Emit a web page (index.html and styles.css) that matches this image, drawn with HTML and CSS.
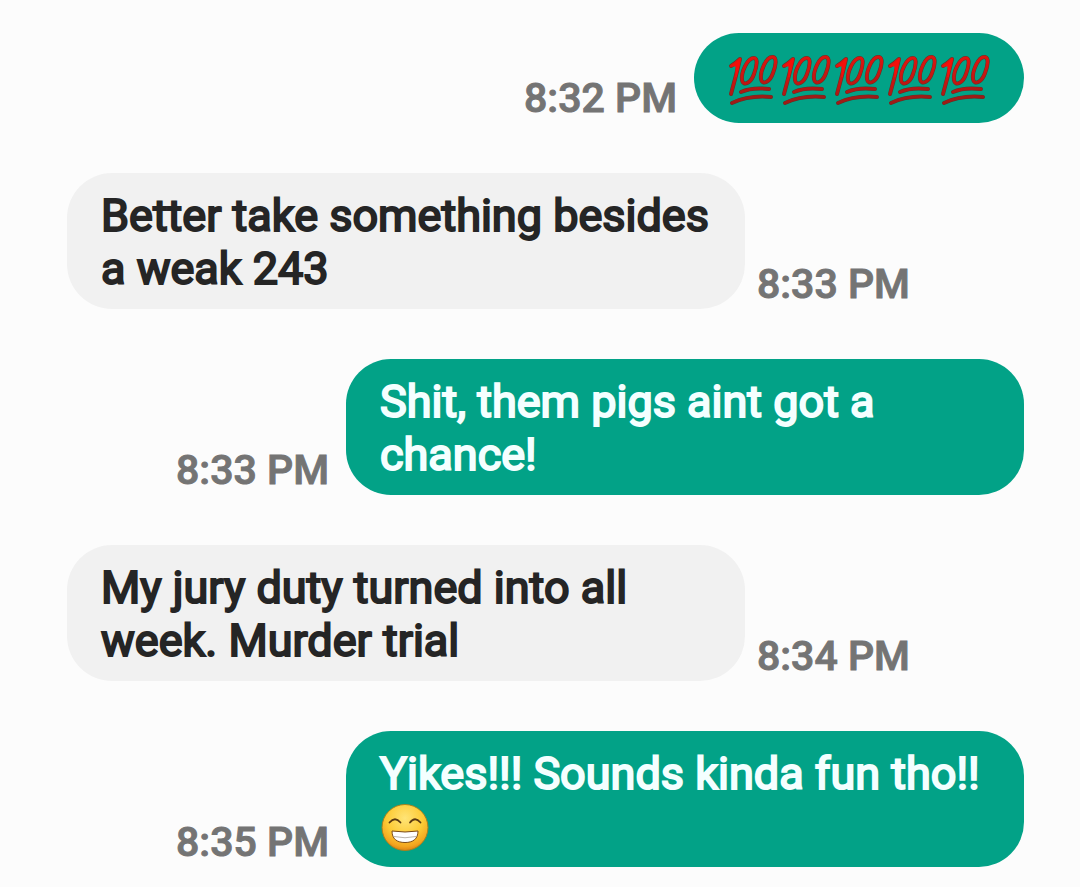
FILE: index.html
```html
<!DOCTYPE html>
<html lang="en">
    <head>
        <meta charset="utf-8">
        <meta name="viewport" content="width=device-width, initial-scale=1">
        <title>Messages</title>
        <link rel="stylesheet" href="styles.css">
    </head>
    <body>

        <svg class="sprite" aria-hidden="true">
            <defs>
                <linearGradient id="red" gradientUnits="userSpaceOnUse" x1="10" y1="8" x2="20" y2="57">
                    <stop offset="0" stop-color="#e6140f"/>
                    <stop offset="0.5" stop-color="#c51712"/>
                    <stop offset="1" stop-color="#941c18"/>
                </linearGradient>
                <radialGradient id="face" cx="0.5" cy="0.3" r="0.72">
                    <stop offset="0" stop-color="#ffe477"/>
                    <stop offset="0.55" stop-color="#fdcb35"/>
                    <stop offset="0.85" stop-color="#f3a51f"/>
                    <stop offset="1" stop-color="#d97c12"/>
                </radialGradient>
                <g id="marks" fill="none" stroke-linecap="round" stroke-linejoin="round">
                    <path d="M4 18Q9 15 13 11Q9 28 4 46"/>
                    <path d="M27 10C20 10 14 25 15 32C16 39 24 35 27 26C30 18 31 10 27 10Z"/>
                    <path d="M46 9C39 8 33 24 34 31C35 38 43 34 46 25C49 17 50 10 46 9Z"/>
                    <path d="M14 44Q25 39 42 41"/>
                    <path d="M5 55Q22 47 44 49"/>
                </g>
            </defs>
            <symbol id="hundred" viewBox="1 1 50 60">
                <use href="#marks" stroke="#5d3427" stroke-width="4"/>
                <use href="#marks" stroke="url(#red)" stroke-width="3"/>
                <path d="M5 18Q9 15 13 11Q12 20 9 29L9 18Z" fill="#f50f0a" stroke="#f50f0a" stroke-linejoin="round"/>
            </symbol>
            <symbol id="grin" viewBox="1 1 52 53">
                <circle cx="26" cy="28.5" r="23" fill="url(#face)" stroke="#a8811d"/>
                <path d="M10.5 23.5Q16 17 21.500 23.500M31 23.500Q36 17 41.500 23.500" fill="none" stroke="#5b3a12" stroke-width="1.8" stroke-linecap="round"/>
                <path d="M13 32Q26 34 39 32C39 40 34 43.500 26 43.500S13 40 13 32Z" fill="#fff" stroke="#7a4a18" stroke-linejoin="round"/>
                <path d="M15 37.500Q26 40 37 37.500" fill="none" stroke="#b9b4ac"/>
            </symbol>
        </svg>

        <main class="chat">
            <div class="message sent">
                <div class="bubble emoji-only">
                    <svg class="hundred" role="img" aria-label="100"><use href="#hundred"/></svg>
                    <svg class="hundred" role="img" aria-label="100"><use href="#hundred"/></svg>
                    <svg class="hundred" role="img" aria-label="100"><use href="#hundred"/></svg>
                    <svg class="hundred" role="img" aria-label="100"><use href="#hundred"/></svg>
                    <svg class="hundred" role="img" aria-label="100"><use href="#hundred"/></svg>
                </div>
                <time class="time">8:32 PM</time>
            </div>

            <div class="message">
                <div class="bubble">Better take something besides a weak 243</div>
                <time class="time">8:33 PM</time>
            </div>

            <div class="message sent">
                <div class="bubble">Shit, them pigs aint got a chance!</div>
                <time class="time">8:33 PM</time>
            </div>

            <div class="message">
                <div class="bubble">My jury duty turned into all week. Murder trial</div>
                <time class="time">8:34 PM</time>
            </div>

            <div class="message sent">
                <div class="bubble">Yikes!!! Sounds kinda fun tho!! <svg class="grin" role="img" aria-label="Grinning face"><use href="#grin"/></svg></div>
                <time class="time">8:35 PM</time>
            </div>
        </main>

    </body>
</html>
```
FILE: styles.css
```css
* {
    box-sizing: border-box;
}
body {
    margin: 0;
    background: #fcfcfc;
    color: #252525;
    font-family: Roboto, sans-serif;
}
.sprite {
    position: absolute;
    width: 0;
    height: 0;
}
.chat {
    display: flex;
    flex-direction: column;
    gap: 50px;
    padding: 33px 56px 20px 67px;
}
.message {
    display: flex;
    align-items: flex-end;
    gap: 12px;
}
.sent {
    flex-direction: row-reverse;
    gap: 17px;
}
.bubble {
    max-width: 678px;
    padding: 16px 34px 14px;
    border-radius: 45px;
    background: #f1f1f1;
    font-size: 45px;
    line-height: 53px;
    -webkit-text-stroke: 2px;
}
.sent .bubble {
    background: #02a287;
    color: #f4ffff;
}
.emoji-only {
    display: flex;
    gap: 3px;
}
.time {
    color: #747474;
    font-size: 41px;
    font-weight: 500;
    line-height: 50px;
    white-space: nowrap;
    -webkit-text-stroke: 1px;
}
.hundred {
    width: 50px;
    height: 60px;
}
.grin {
    width: 52px;
    height: 53px;
    vertical-align: top;
}
```
